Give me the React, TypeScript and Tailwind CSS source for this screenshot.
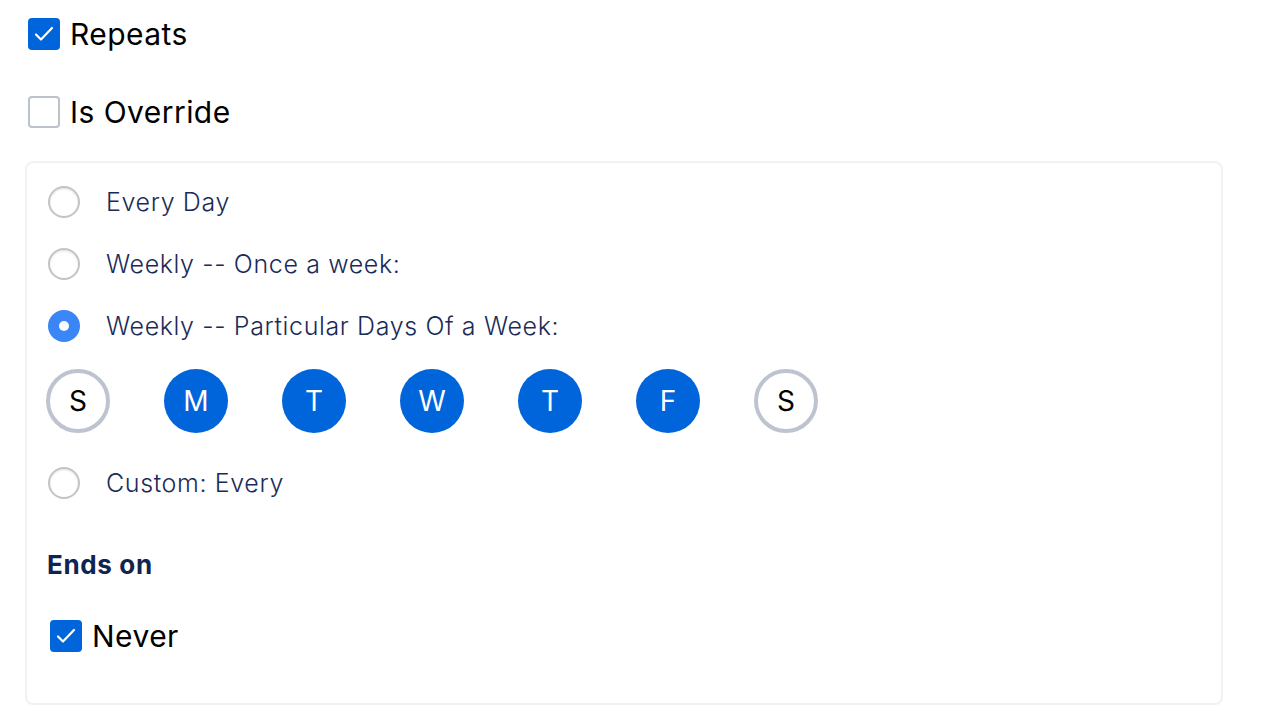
import React, { useState } from "react";

const DAYS = [
  { key: "sun", label: "S", on: false },
  { key: "mon", label: "M", on: true },
  { key: "tue", label: "T", on: true },
  { key: "wed", label: "W", on: true },
  { key: "thu", label: "T", on: true },
  { key: "fri", label: "F", on: true },
  { key: "sat", label: "S", on: false },
];

const OPTIONS = [
  { id: "daily", label: "Every Day" },
  { id: "weekly", label: "Weekly -- Once a week:" },
  { id: "days", label: "Weekly -- Particular Days Of a Week:" },
];

function Checkbox({ checked, label }: { checked: boolean; label: string }) {
  return (
    <label className="flex items-center gap-[10px]">
      {checked ? (
        <span className="flex size-[32px] shrink-0 items-center justify-center rounded-[4px] bg-[#0064da]">
          <svg width="22" height="22" viewBox="0 0 22 22" fill="none" stroke="white" strokeWidth="2.2" strokeLinecap="round" strokeLinejoin="round">
            <path d="M3 11.5l5 5L19 5" />
          </svg>
        </span>
      ) : (
        <span className="size-[32px] shrink-0 rounded-[4px] border-2 border-[#bcc2cd] bg-white" />
      )}
      <span className="text-[30px] leading-none tracking-[0.015em] text-black">{label}</span>
    </label>
  );
}

function Radio({ checked, label }: { checked: boolean; label: string }) {
  return (
    <div className="flex h-[32px] items-center gap-[26px]">
      {checked ? (
        <span className="flex size-[32px] items-center justify-center rounded-full bg-[#3b86f7]">
          <span className="size-[10px] rounded-full bg-white" />
        </span>
      ) : (
        <span className="size-[32px] rounded-full border-2 border-[#c4c4c4] bg-white shadow-[inset_0_1px_2px_rgba(0,0,0,0.12)]" />
      )}
      <span className="text-[25px] font-light leading-none tracking-[0.025em] text-[#1b2b58]">{label}</span>
    </div>
  );
}

export default function App() {
  const [selected] = useState("days");
  return (
    <div className="bg-white pl-[25px] pr-[39px] pt-[18px] font-['Inter',sans-serif]">
      <div className="ml-[3px] flex flex-col gap-[46px]">
        <Checkbox checked label="Repeats" />
        <Checkbox checked={false} label="Is Override" />
      </div>
      <div className="mt-[33px] h-[544px] rounded-[8px] border-2 border-[#f1f2f4] pl-[21px] pt-[23px]">
        <div className="flex flex-col gap-[30px]">
          {OPTIONS.map((o) => (
            <Radio key={o.id} checked={selected === o.id} label={o.label} />
          ))}
        </div>
        <div className="ml-[-2px] mt-[27px] flex gap-[54px]">
          {DAYS.map((d) =>
            d.on ? (
              <span key={d.key} className="flex size-[64px] items-center justify-center rounded-full bg-[#0064da] text-[28px] text-white">
                {d.label}
              </span>
            ) : (
              <span key={d.key} className="flex size-[64px] items-center justify-center rounded-full border-4 border-[#bec4cf] bg-white text-[28px] text-black">
                {d.label}
              </span>
            )
          )}
        </div>
        <div className="mt-[34px]">
          <Radio checked={false} label="Custom: Every" />
        </div>
        <p className="ml-[-1px] mt-[53px] text-[26px] font-bold leading-none tracking-[0.025em] text-[#0f2450]">Ends on</p>
        <div className="ml-[2px] mt-[42px]">
          <Checkbox checked label="Never" />
        </div>
      </div>
    </div>
  );
}
